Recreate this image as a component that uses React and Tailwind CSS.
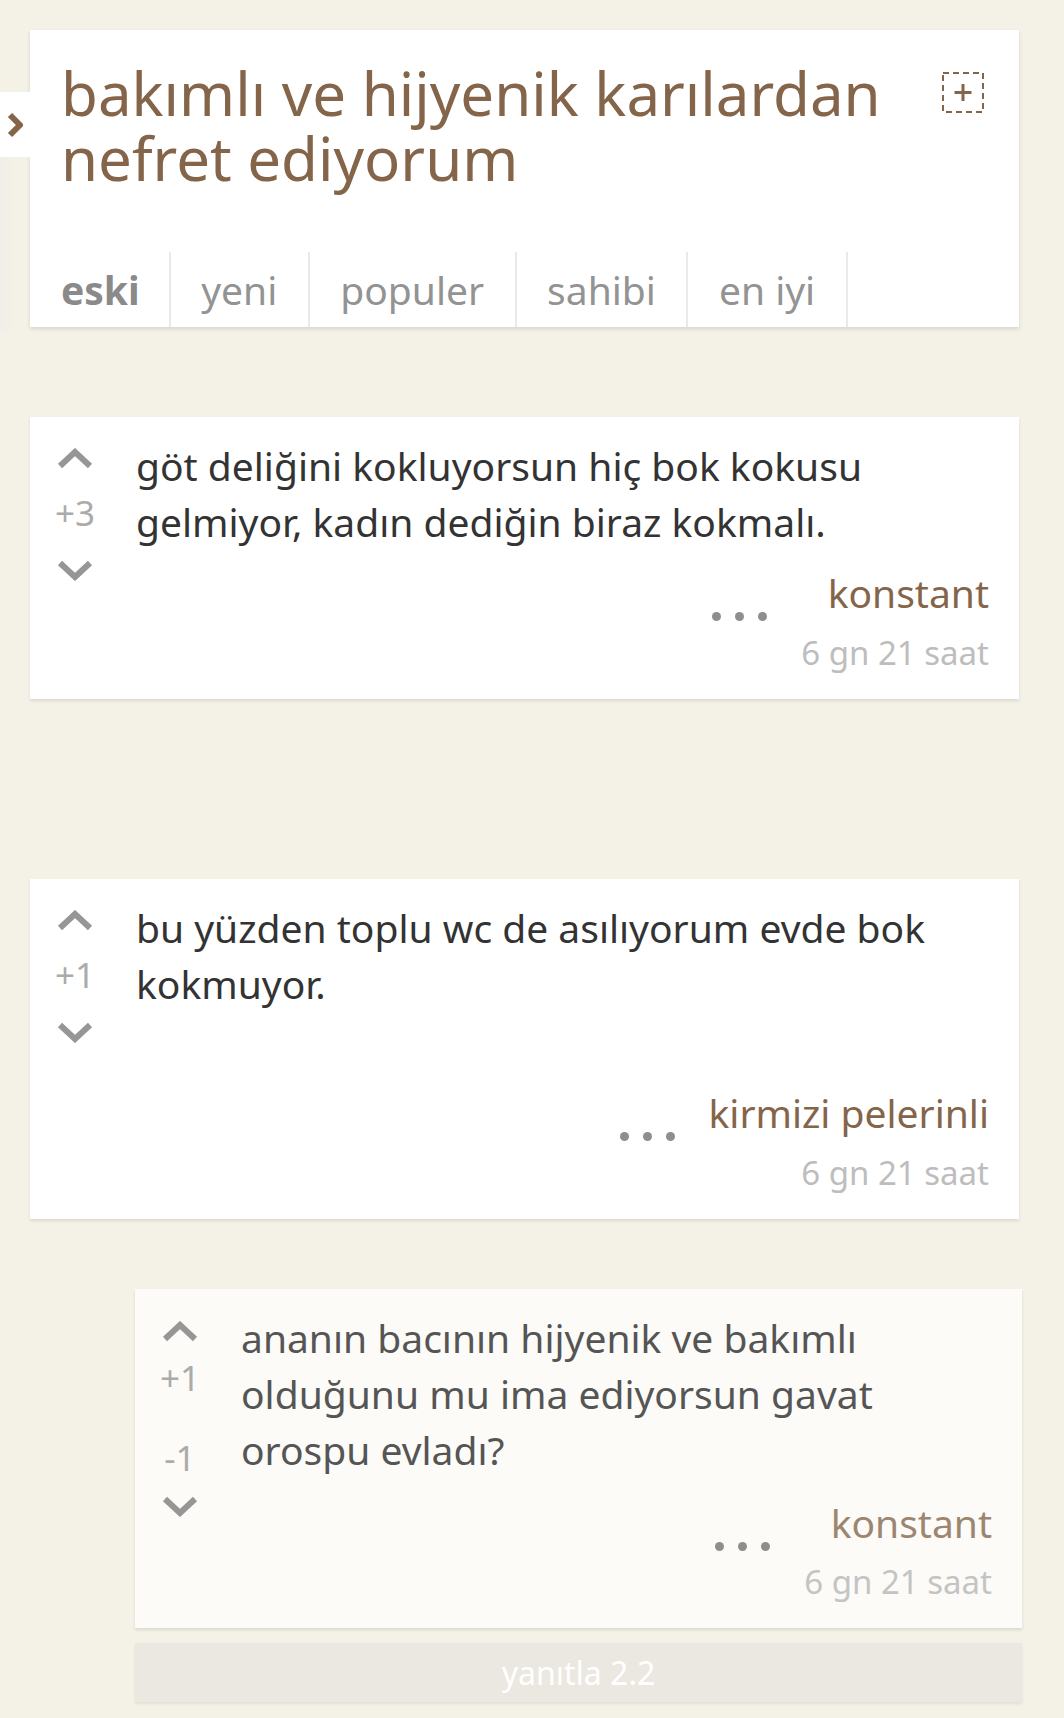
import React from 'react';

const brown = 'text-[#85654a]';

const Chevron = ({ down = false }) => (
  <svg width="36" height="22" viewBox="0 0 36 22" className="block">
    <polyline
      points={down ? '3,4 18,18 33,4' : '3,18 18,4 33,18'}
      fill="none"
      stroke="#969696"
      strokeWidth="6"
    />
  </svg>
);

const Dots = () => (
  <div className="flex gap-[14px] mt-[47px]">
    <span className="w-[9px] h-[9px] rounded-full bg-[#8e8e8e]" />
    <span className="w-[9px] h-[9px] rounded-full bg-[#8e8e8e]" />
    <span className="w-[9px] h-[9px] rounded-full bg-[#8e8e8e]" />
  </div>
);

const Comment = ({ score, text, author, extraLine = false }) => (
  <div className="flex bg-white shadow-[0_2px_3px_rgba(0,0,0,0.1)]">
    <div className="w-[90px] shrink-0 flex flex-col items-center pt-[31px]">
      <Chevron />
      <div className="mt-[25px] text-[35px] leading-[35px] text-[#ababab]">{score}</div>
      <div className="mt-[29px]">
        <Chevron down />
      </div>
    </div>
    <div className="flex-1 pl-[16px] pr-[30px] pt-[21px] pb-[22px]">
      <p className="text-[39px] leading-[56px] text-[#333]">{text}</p>
      {extraLine && <div className="h-[58px]" />}
      <div className="flex justify-end items-start gap-[34px] mt-[15px]">
        <Dots />
        <div className="flex flex-col items-end">
          <span className={`text-[39px] leading-[56px] ${brown}`}>{author}</span>
          <span className="mt-[8px] text-[33px] leading-[48px] text-[#bdbdbd]">6 gn 21 saat</span>
        </div>
      </div>
    </div>
  </div>
);

export default function App() {
  const tabs = ['eski', 'yeni', 'populer', 'sahibi', 'en iyi'];

  return (
    <div className="relative min-h-[1718px] bg-[#f4f1e7] font-['Noto_Sans',sans-serif]">
      {/* side drawer handle */}
      <div className="absolute left-0 top-[92px] w-[30px] h-[65px] bg-white flex items-center justify-center">
        <svg width="20" height="30" viewBox="0 0 20 30">
          <polyline points="5,5 15,15 5,25" fill="none" stroke="#85654a" strokeWidth="6" strokeLinejoin="round" />
        </svg>
      </div>
      <div className="absolute left-0 top-[157px] w-[14px] h-[175px] bg-gradient-to-r from-[#efeee9] to-transparent" />

      <div className="pt-[30px] pl-[30px] pr-[45px] pb-[16px]">
        {/* header */}
        <div className="bg-white shadow-[0_2px_4px_rgba(0,0,0,0.12)]">
          <div className="flex items-start pt-[31px] pl-[31px] pr-[35px]">
            <h1 className={`flex-1 text-[60px] leading-[65px] ${brown}`}>
              bakımlı ve hijyenik karılardan nefret ediyorum
            </h1>
            <svg width="42" height="41" viewBox="0 0 42 41" className="mt-[11px] shrink-0">
              <rect x="1" y="1" width="40" height="39" fill="none" stroke="#85654a" strokeWidth="2" strokeDasharray="6 4" />
              <path d="M21 12v17M12.5 20.5h17" stroke="#85654a" strokeWidth="3" />
            </svg>
          </div>
          <div className="flex mt-[61px]">
            {tabs.map((t, i) => (
              <div
                key={t}
                className={`h-[75px] leading-[75px] text-[39px] border-r-2 border-[#e9e9e9] ${
                  i === 0 ? 'pl-[31px] pr-[29px] font-bold text-[#8a8a8a]' : 'px-[30.5px] text-[#939393]'
                }`}
              >
                {t}
              </div>
            ))}
          </div>
        </div>

        <div className="mt-[90px]">
          <Comment
            score="+3"
            text="göt deliğini kokluyorsun hiç bok kokusu gelmiyor, kadın dediğin biraz kokmalı."
            author="konstant"
          />
        </div>

        <div className="mt-[180px]">
          <Comment
            score="+1"
            text="bu yüzden toplu wc de asılıyorum evde bok kokmuyor."
            author="kirmizi pelerinli"
            extraLine
          />
        </div>

        {/* reply */}
        <div className="mt-[70px] ml-[105px] mr-[-3px]">
          <div className="flex bg-[#fcfbf7] shadow-[0_2px_3px_rgba(0,0,0,0.1)]">
            <div className="w-[90px] shrink-0 flex flex-col items-center pt-[32px]">
              <Chevron />
              <div className="mt-[17px] text-[35px] leading-[35px] text-[#ababab]">+1</div>
              <div className="mt-[45px] text-[35px] leading-[35px] text-[#ababab]">-1</div>
              <div className="mt-[20px]">
                <Chevron down />
              </div>
            </div>
            <div className="flex-1 pl-[16px] pr-[30px] pt-[21px] pb-[22px]">
              <p className="text-[39px] leading-[56px] text-[#555]">
                ananın bacının hijyenik ve bakımlı olduğunu mu ima ediyorsun gavat orospu evladı?
              </p>
              <div className="flex justify-end items-start gap-[34px] mt-[17px]">
                <Dots />
                <div className="flex flex-col items-end">
                  <span className="text-[39px] leading-[56px] text-[#9c8670]">konstant</span>
                  <span className="mt-[7px] text-[33px] leading-[48px] text-[#c4c4c4]">6 gn 21 saat</span>
                </div>
              </div>
            </div>
          </div>
          <div className="mt-[15px] h-[59px] bg-[#ebe8e1] text-center text-[32px] leading-[59px] text-white shadow-[0_2px_3px_rgba(0,0,0,0.08)]">
            yanıtla 2.2
          </div>
        </div>
      </div>
    </div>
  );
}
